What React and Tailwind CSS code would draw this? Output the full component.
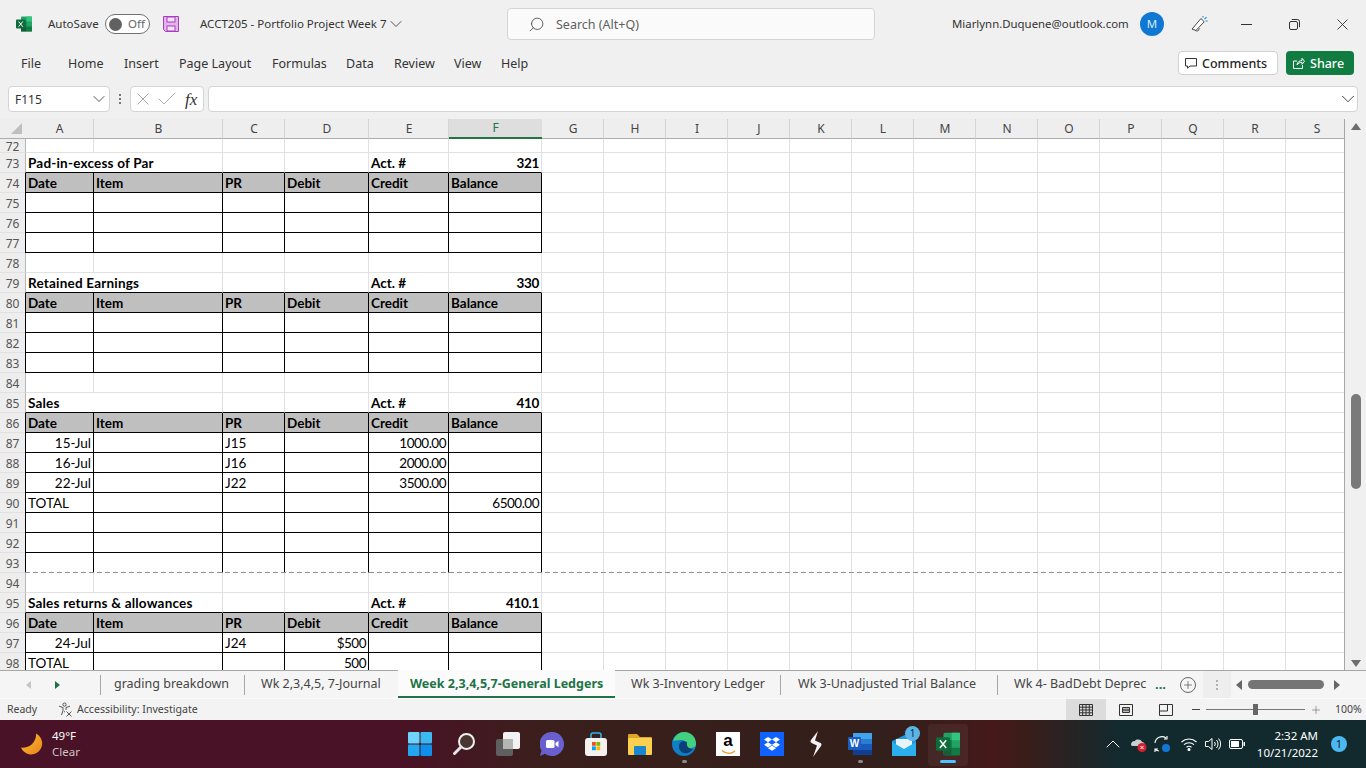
import React from "react";
import { ChevronDown, Search, Check, Plus, ChevronUp } from "lucide-react";

const UI = "font-['Noto_Sans','Open_Sans',sans-serif]";
const COLS = "grid grid-cols-[69px_129px_62px_84px_80px_93px_repeat(13,62px)]";
const LETTERS = "ABCDEFGHIJKLMNOPQRS".split("");
const EMPTY_G = Array(13).fill(0); // G..S columns, always empty

// ledger rows from the sheet
const LEDGER = [
    { n: 72, kind: "plain", h: "h-[14px]" },
    { n: 73, kind: "title", title: "Pad-in-excess of Par", acct: "321" },
    { n: 74, kind: "head" },
    { n: 75, kind: "box" },
    { n: 76, kind: "box" },
    { n: 77, kind: "box" },
    { n: 78, kind: "plain" },
    { n: 79, kind: "title", title: "Retained Earnings", acct: "330" },
    { n: 80, kind: "head" },
    { n: 81, kind: "box" },
    { n: 82, kind: "box" },
    { n: 83, kind: "box" },
    { n: 84, kind: "plain" },
    { n: 85, kind: "title", title: "Sales", acct: "410" },
    { n: 86, kind: "head" },
    { n: 87, kind: "box", cells: ["15-Jul", "", "J15", "", "1000.00", ""] },
    { n: 88, kind: "box", cells: ["16-Jul", "", "J16", "", "2000.00", ""] },
    { n: 89, kind: "box", cells: ["22-Jul", "", "J22", "", "3500.00", ""] },
    { n: 90, kind: "box", cells: ["TOTAL", "", "", "", "", "6500.00"] },
    { n: 91, kind: "box" },
    { n: 92, kind: "box" },
    { n: 93, kind: "box", dashed: true },
    { n: 94, kind: "plain" },
    { n: 95, kind: "title", title: "Sales returns & allowances", acct: "410.1" },
    { n: 96, kind: "head" },
    { n: 97, kind: "box", cells: ["24-Jul", "", "J24", "$500", "", ""] },
    { n: 98, kind: "box", cells: ["TOTAL", "", "", "500", "", ""] }, // clipped by the sheet's bottom edge
];
const HEAD = ["Date", "Item", "PR", "Debit", "Credit", "Balance"];

function ExcelLogo({ size = 16 }) {
    return (
        <svg width={size} height={size} viewBox="0 0 16 16" className="shrink-0">
            <rect x="5" y="0.5" width="11" height="15" rx="1" fill="#21a366" />
            <rect x="10.5" y="0.5" width="5.5" height="5" fill="#33c481" />
            <rect x="5" y="5.5" width="5.5" height="5" fill="#107c41" />
            <rect x="10.5" y="10.5" width="5.5" height="5" fill="#107c41" />
            <rect x="5" y="10.5" width="5.5" height="5" fill="#185c37" />
            <rect x="0" y="3.5" width="9.5" height="9" rx="1" fill="#0e6b3a" />
            <path d="M2.6 5.5l4.200 5.200M6.800 5.500L2.600 10.700" stroke="#fff" strokeWidth="1" fill="none" />
        </svg>
    );
}

function SaveIcon() {
    return (
        <svg width="16" height="16" viewBox="0 0 16 16" className="shrink-0">
            <path d="M.5.5h15v15H2.5l-2-2z" fill="#e3b4ea" stroke="#a93cc0" />
            <rect x="4" y="1" width="8" height="5" fill="#f3e2f6" stroke="#a93cc0" strokeWidth="1" />
            <rect x="4" y="10" width="8" height="5" fill="#f3e2f6" stroke="#a93cc0" strokeWidth="1" />
        </svg>
    );
}

function FeedbackIcon() {
    return (
        <svg width="18" height="18" viewBox="0 0 18 18" fill="none" className="shrink-0">
            <path d="M10 3.5l3.2 3.4-8.4 8.6-3.8-1.4z" stroke="#4a4a4a" strokeWidth="1" fill="#fff" />
            <path d="M4 14.8a2.2 2.2 0 0 0 3.6.5l.7-2" stroke="#4a4a4a" strokeWidth="1" />
            <path d="M13.5 4.2l2-2M14.6 6h2M12 2.6V1" stroke="#1b86d6" strokeWidth="1.1" />
        </svg>
    );
}

function RestoreIcon() {
    return (
        <svg width="11" height="11" viewBox="0 0 11 11" fill="none" stroke="#333" strokeWidth="1" className="shrink-0">
            <rect x="0.5" y="2.5" width="8" height="8" rx="1.5" />
            <path d="M2.8.5h5.7a2 2 0 0 1 2 2v5.7" />
        </svg>
    );
}

function CrossIcon({ size = 11, stroke = "#333" }) {
    return (
        <svg width={size} height={size} viewBox="0 0 11 11" fill="none" stroke={stroke} strokeWidth="0.9" className="shrink-0">
            <path d="M.5.5l10 10M10.500.5l-10 10" />
        </svg>
    );
}

function Toggle() {
    return (
        <div className="ml-[7px] flex h-5 w-[45px] shrink-0 items-center rounded-full border border-[#707070] bg-white pl-[3px]">
            <div className="h-[13px] w-[13px] rounded-full bg-[#616161]" />
            <span className="ml-[6px] text-[11.5px] text-[#666]">Off</span>
        </div>
    );
}

function TitleBar() {
    return (
        <div className="flex h-[48px] items-center pl-4 text-[#333]">
            <ExcelLogo />
            <span className="ml-4 w-[50px] shrink-0 text-[11.5px]">AutoSave</span>
            <Toggle />
            <div className="ml-[13px]"><SaveIcon /></div>
            <span className="ml-[21px] w-[186px] shrink-0 whitespace-nowrap text-[11.5px]">ACCT205 - Portfolio Project Week 7</span>
            <ChevronDown size={20} strokeWidth={1} className="shrink-0" />
            <div className="ml-[101px] flex h-8 w-[368px] shrink-0 items-center rounded border border-[#d4d4d4] bg-[#fafafa] pl-[20px] text-[#666]">
                <Search size={17} strokeWidth={1.2} className="-scale-x-100 text-[#444]" />
                <span className="ml-[11px] pt-[2px] text-[12.5px] text-[#5f5f5f]">Search (Alt+Q)</span>
            </div>
            <span className="ml-[77px] w-[177px] shrink-0 whitespace-nowrap text-[11.4px]">Miarlynn.Duquene@outlook.com</span>
            <div className="ml-[11px] flex h-6 w-6 shrink-0 items-center justify-center rounded-full bg-[#0f78d4] text-[11.5px] text-[#d8e9f8]">M</div>
            <div className="ml-[27px]"><FeedbackIcon /></div>
            <div className="ml-[32px] h-px w-[11px] shrink-0 bg-[#333]" />
            <div className="ml-[37px]"><RestoreIcon /></div>
            <div className="ml-[37px]"><CrossIcon /></div>
        </div>
    );
}

function MenuBar() {
    const tabs = [
        ["File", "ml-[21px] w-[19px]"],
        ["Home", "ml-[28px] w-[35px]"],
        ["Insert", "ml-[21px] w-[32px]"],
        ["Page Layout", "ml-[23px] w-[71px]"],
        ["Formulas", "ml-[22px] w-[53px]"],
        ["Data", "ml-[21px] w-[27px]"],
        ["Review", "ml-[21px] w-[40px]"],
        ["View", "ml-[20px] w-[27px]"],
        ["Help", "ml-[20px] w-[27px]"],
    ];
    return (
        <div className="flex h-[30px] items-center pr-3 text-[12.5px] text-[#333]">
            {tabs.map(([label, cls]) => (
                <span key={label} className={`${cls} shrink-0 whitespace-nowrap pt-[2px]`}>{label}</span>
            ))}
            <div className="ml-auto flex h-6 w-[100px] items-center gap-[5px] rounded border border-[#d0d0d0] bg-white pl-[6px] text-[12.5px] font-medium text-[#262626]">
                <svg width="12" height="12" viewBox="0 0 12 12" fill="none" stroke="#333"><path d="M.5 1.500h11v7.500H5L2.500 11.200V9H.5z" /></svg>
                <span className="pt-[2px]">Comments</span>
            </div>
            <div className="ml-2 flex h-6 w-[68px] items-center gap-[5px] rounded bg-[#107c41] pl-[7px] text-[12.5px] font-medium text-white">
                <svg width="12" height="12" viewBox="0 0 12 12" fill="none" stroke="#fff"><path d="M4 4H.5v7.500h9V8M4 8c.3-3 2.500-4.500 5-4.500V1.300l2.500 3-2.500 3V5.300C7 5.300 5.300 6 4 8z" /></svg>
                <span className="pt-[2px]">Share</span>
            </div>
        </div>
    );
}

function FormulaBar() {
    return (
        <div className="mt-2 flex h-[26px] pl-2 pr-2 text-[#333]">
            <div className="flex w-[102px] items-center justify-between rounded border border-[#d4d4d4] bg-white pl-[6px] text-[12px]">
                <span className="pt-[2px]">F115</span>
                <ChevronDown size={20} strokeWidth={1} />
            </div>
            <div className="flex w-5 flex-col items-center justify-center gap-[2px]">
                <span className="h-[2px] w-[2px] bg-[#777]" />
                <span className="h-[2px] w-[2px] bg-[#777]" />
                <span className="h-[2px] w-[2px] bg-[#777]" />
            </div>
            <div className="flex w-[74px] items-center rounded border border-[#d4d4d4] bg-white pl-[6px]">
                <CrossIcon size={12} stroke="#a6a6a6" />
                <Check size={24} strokeWidth={0.9} className="ml-[6px] shrink-0 text-[#a6a6a6]" />
                <span className="ml-[6px] font-['Liberation_Serif',serif] text-[17px] italic leading-none text-[#333]">fx</span>
            </div>
            <div className="ml-[4px] flex flex-1 items-center justify-end rounded border border-[#d4d4d4] bg-white">
                <ChevronDown size={22} strokeWidth={1} className="-mr-[2px]" />
            </div>
        </div>
    );
}

function ColumnHeader() {
    return (
        <div className={`flex h-5 bg-[#eeeeee] ${UI}`}>
            <div className="flex w-[25px] shrink-0 items-end justify-end border-b border-[#adadad] pb-[4px] pr-[3px]">
                <div className="h-0 w-0 border-b-[11px] border-l-[11px] border-b-[#bfbfbf] border-l-transparent" />
            </div>
            <div className={COLS}>
                {LETTERS.map((c) =>
                    c === "F" ? (
                        <div key={c} className="flex items-center justify-center border-b-2 border-[#217346] bg-[#dedede] text-[12px] text-[#217346]">{c}</div>
                    ) : (
                        <div key={c} className="flex items-center justify-center border-b border-r border-b-[#adadad] border-r-[#d4d4d4] pl-px text-[12px] text-[#444]">{c}</div>
                    )
                )}
            </div>
        </div>
    );
}

function Cell({ children, black, dashed, first, right, tight }) {
    const edge = black ? "border-r-black" : "border-r-[#e1e1e1]";
    const bottom = dashed ? "border-b-transparent" : black ? "border-b-black" : "border-b-[#e1e1e1]";
    const left = first ? (black ? "border-l border-l-black" : "border-l border-l-[#b5b5b5]") : "";
    return (
        <div
            className={`flex items-center whitespace-nowrap border-b border-r px-[2px] pt-[2px] ${edge} ${bottom} ${left} ${right ? "justify-end" : ""} ${tight ? "tracking-[-0.5px]" : ""}`}
        >
            {children}
        </div>
    );
}

function SheetRow({ row }) {
    const { n, kind, h = "h-5" } = row;
    const tail = EMPTY_G.map((_, i) => (
        <div key={i} className={`border-b border-r border-r-[#e1e1e1] ${row.dashed ? "border-b-transparent" : "border-b-[#e1e1e1]"}`} />
    ));
    let cells;
    if (kind === "plain") {
        cells = [0, 1, 2, 3, 4, 5].map((i) => <Cell key={i} first={i === 0} />);
    } else if (kind === "title") {
        cells = (
            <>
                <div className="col-span-2 flex items-center whitespace-nowrap border-b border-l border-r border-b-black border-l-[#b5b5b5] border-r-[#e1e1e1] px-[2px] pt-[2px] font-bold tracking-[0.2px]">{row.title}</div>
                <div className="border-b border-r border-b-black border-r-[#e1e1e1]" />
                <div className="border-b border-r border-b-black border-r-[#e1e1e1]" />
                <div className="flex items-center border-b border-r border-b-black border-r-[#e1e1e1] px-[2px] pt-[2px] font-bold">Act. #</div>
                <div className="flex items-center justify-end border-b border-r border-b-black border-r-[#e1e1e1] px-[2px] pt-[2px] font-bold tracking-[-0.3px]">{row.acct}</div>
            </>
        );
    } else if (kind === "head") {
        cells = HEAD.map((t, i) => (
            <div key={t} className={`flex items-center border-b border-r border-black bg-[#bfbfbf] px-[2px] pt-[2px] font-bold ${i === 0 ? "border-l" : ""}`}>{t}</div>
        ));
    } else {
        const vals = row.cells || ["", "", "", "", "", ""];
        cells = vals.map((v, i) => {
            const numeric = v && !/^(TOTAL|J\d+)$/.test(v);
            return (
                <Cell key={i} black first={i === 0} dashed={row.dashed} right={numeric} tight={/^\$?[\d.]+$/.test(v)}>{v}</Cell>
            );
        });
    }
    return (
        <div className={`relative flex ${h}`}>
            <div className={`flex w-[25px] shrink-0 items-center justify-center border-b border-b-[#e1e1e1] bg-[#eeeeee] pt-[2px] text-[12px] text-[#555] ${UI}`}>{n}</div>
            <div className={`${COLS} font-['Lato','Carlito',sans-serif] text-[13.5px] leading-none text-black`}>
                {cells}
                {tail}
            </div>
            {/* page break line */}
            {row.dashed && (
                <div className="absolute bottom-0 left-[25px] right-0 h-px bg-[repeating-linear-gradient(90deg,#919191_0_5px,transparent_5px_8px)]" />
            )}
        </div>
    );
}

function VScroll() {
    return (
        <div className="flex w-[21px] shrink-0 flex-col items-center bg-[#f0f0f0]">
            <div className="mt-[4px] h-0 w-0 border-b-[7px] border-l-[5px] border-r-[5px] border-b-[#6d6d6d] border-l-transparent border-r-transparent" />
            <div className="mt-[264px] h-[95px] w-[10px] rounded-full bg-[#7a7a7a]" />
            <div className="mt-auto mb-[3px] h-0 w-0 border-l-[5px] border-r-[5px] border-t-[7px] border-l-transparent border-r-transparent border-t-[#6d6d6d]" />
        </div>
    );
}

function TabBar() {
    const inactive = "shrink-0 whitespace-nowrap text-[12.5px] text-[#444]";
    return (
        <div className={`flex h-[28px] items-stretch bg-[#f5f5f5] ${UI}`}>
            <div className="flex w-[398px] shrink-0 items-center border-t border-[#a6a6a6] pl-[26px]">
                <div className="h-0 w-0 border-b-[4px] border-r-[5px] border-t-[4px] border-b-transparent border-r-[#c4c4c4] border-t-transparent" />
                <div className="ml-[24px] h-0 w-0 border-b-[4px] border-l-[5px] border-t-[4px] border-b-transparent border-l-[#217346] border-t-transparent" />
                <div className="ml-[40px] h-[20px] w-px bg-[#a6a6a6]" />
                <span className={`ml-[13px] w-[116px] ${inactive}`}>grading breakdown</span>
                <div className="ml-[14px] h-[20px] w-px bg-[#a6a6a6]" />
                <span className={`ml-[16px] w-[120px] ${inactive}`}>Wk 2,3,4,5, 7-Journal</span>
            </div>
            <div className="flex w-[217px] shrink-0 items-center border-b-2 border-[#217346] bg-[#fbfbfb] pl-3 pt-[2px] text-[12.5px] font-bold text-[#217346]">
                <span className="whitespace-nowrap">Week 2,3,4,5,7-General Ledgers</span>
            </div>
            <div className="flex flex-1 items-center border-t border-[#a6a6a6]">
                <span className={`ml-[16px] w-[132px] ${inactive}`}>Wk 3-Inventory Ledger</span>
                <div className="ml-[17px] h-[20px] w-px bg-[#a6a6a6]" />
                <span className={`ml-[17px] w-[177px] ${inactive}`}>Wk 3-Unadjusted Trial Balance</span>
                <div className="ml-[22px] h-[20px] w-px bg-[#a6a6a6]" />
                <span className={`ml-[16px] w-[134px] ${inactive}`}>Wk 4- BadDebt Deprec</span>
                <span className="ml-[7px] w-[11px] text-[13px] font-bold leading-none text-[#217346]">...</span>
                <div className="ml-[14px] flex h-4 w-4 shrink-0 items-center justify-center rounded-full border border-[#666]">
                    <Plus size={12} strokeWidth={1.5} className="text-[#555]" />
                </div>
                <div className="ml-[7px] flex h-full w-[28px] shrink-0 flex-col items-center justify-center gap-[2px] bg-[#eeeeee]">
                    <span className="h-[2px] w-[2px] bg-[#b0b0b0]" />
                    <span className="h-[2px] w-[2px] bg-[#b0b0b0]" />
                    <span className="h-[2px] w-[2px] bg-[#b0b0b0]" />
                </div>
                <div className="ml-[5px] h-0 w-0 border-b-[5px] border-r-[6px] border-t-[5px] border-b-transparent border-r-[#666] border-t-transparent" />
                <div className="ml-[6px] h-[9px] w-[76px] rounded-full bg-[#757575]" />
                <div className="ml-[10px] h-0 w-0 border-b-[5px] border-l-[6px] border-t-[5px] border-b-transparent border-l-[#666] border-t-transparent" />
            </div>
        </div>
    );
}

function StatusBar() {
    return (
        <div className={`flex h-[22px] items-center border-t border-[#fbfbfb] bg-[#f3f3f3] pl-[7px] text-[#444] ${UI}`}>
            <span className="w-[31px] text-[10.5px]">Ready</span>
            <svg width="15" height="15" viewBox="0 0 15 15" fill="none" stroke="#444" strokeWidth="0.9" className="ml-5 shrink-0">
                <circle cx="6.5" cy="2.6" r="1.6" />
                <path d="M1 4.200l4 1.300v3L3.500 13M12 4.200L8 5.500V8M7 9.500l-1 .5" />
                <path d="M8.500 9.500l5 5M13.500 9.500l-5 5" />
            </svg>
            <span className="ml-[4px] w-[124px] whitespace-nowrap text-[10.6px]">Accessibility: Investigate</span>
            <div className="ml-[865px] flex h-full w-10 shrink-0 items-center justify-center bg-[#dcdcdc]">
                <svg width="14" height="12" viewBox="0 0 14 12" fill="none" stroke="#333"><path d="M.5.5h13v11H.5zM.5 3.200h13M.5 6h13M.5 8.800h13M3.700.5v11M7 .5v11M10.300.5v11" /></svg>
            </div>
            <svg width="14" height="12" viewBox="0 0 14 12" fill="none" stroke="#333" className="ml-[13px] shrink-0"><path d="M.5.5h13v11H.5zM3.500 3.500h7v5h-7zM3.500 5.200h7M3.500 6.800h7" /></svg>
            <svg width="14" height="12" viewBox="0 0 14 12" fill="none" stroke="#333" className="ml-[26px] shrink-0"><path d="M.5.5h13v11H.5zM.5 7h8V.5" /></svg>
            <div className="ml-[19px] h-px w-2 shrink-0 bg-[#444]" />
            <div className="ml-[6px] flex h-px w-[99px] shrink-0 items-center justify-center bg-[#777]">
                <div className="h-[11px] w-[5px] bg-[#666]" />
            </div>
            <Plus size={12} strokeWidth={1} className="ml-[5px] shrink-0" />
            <span className="ml-[13px] text-[10.5px]">100%</span>
        </div>
    );
}

function TaskIcon({ children }) {
    return <div className="relative flex h-full w-[44px] shrink-0 items-center justify-center">{children}</div>;
}

function RunDot() {
    return <span className="absolute bottom-[5px] left-[20px] h-[3px] w-[5px] rounded-full bg-[#8a8a8a]" />;
}

function Taskbar() {
    return (
        <div className={`flex h-[48px] items-center bg-[linear-gradient(90deg,#4a1226_0%,#4a1226_29%,#3a1f1c_40%,#331f1b_65%,#45191a_73%,#3a1d1a_75%,#122a2e_82%,#122a2e_100%)] text-white ${UI}`}>
            <div className="flex w-[398px] shrink-0 items-center pl-[20px]">
                <svg width="24" height="24" viewBox="0 0 24 24">
                    <defs>
                        <linearGradient id="moon" x1="0" y1="0" x2="1" y2="1">
                            <stop offset="0" stopColor="#fbc02d" />
                            <stop offset="1" stopColor="#e8821e" />
                        </linearGradient>
                    </defs>
                    <path d="M16 1.500A11 11 0 1 1 1 15.500a13 13 0 0 0 15-14z" fill="url(#moon)" />
                </svg>
                <div className="ml-2 flex flex-col text-[11.5px] leading-4">
                    <span>49°F</span>
                    <span className="text-[#d0c4c6]">Clear</span>
                </div>
            </div>
            <div className="flex h-full shrink-0">
                <TaskIcon>
                    <svg width="24" height="24" viewBox="0 0 24 24">
                        <rect x="0" y="0" width="11.5" height="11.5" rx="1" fill="#6fd3fb" />
                        <rect x="12.5" y="0" width="11.5" height="11.5" rx="1" fill="#3cb8f3" />
                        <rect x="0" y="12.5" width="11.5" height="11.5" rx="1" fill="#23a8ef" />
                        <rect x="12.5" y="12.5" width="11.5" height="11.5" rx="1" fill="#0f8fe8" />
                    </svg>
                </TaskIcon>
                <TaskIcon>
                    <svg width="24" height="24" viewBox="0 0 24 24" fill="none">
                        <circle cx="14.5" cy="9.5" r="7.5" fill="#4a3530" stroke="#f0f0f0" strokeWidth="2" />
                        <path d="M9 15l-6.500 6.500" stroke="#e6e6e6" strokeWidth="3" strokeLinecap="round" />
                    </svg>
                </TaskIcon>
                <TaskIcon>
                    <svg width="24" height="24" viewBox="0 0 24 24">
                        <rect x="0" y="7" width="17" height="17" rx="2" fill="#5f5f5f" />
                        <rect x="7" y="0" width="17" height="17" rx="2" fill="#f2f2f2" />
                        <rect x="7" y="7" width="10" height="10" fill="#b5b5b5" />
                    </svg>
                </TaskIcon>
                <TaskIcon>
                    <svg width="24" height="24" viewBox="0 0 24 24">
                        <path d="M12 0a12 12 0 1 1-7 21.700L0 24l1.500-5.500A12 12 0 0 1 12 0z" fill="#6a5fcf" />
                        <rect x="6" y="8" width="8.5" height="8" rx="1.5" fill="#fff" />
                        <path d="M15.500 11l3-2.200v6.400l-3-2.200z" fill="#fff" />
                    </svg>
                </TaskIcon>
                <TaskIcon>
                    <svg width="24" height="24" viewBox="0 0 24 24" fill="none">
                        <path d="M7 7V3a2 2 0 0 1 2-2h6a2 2 0 0 1 2 2v4" stroke="#29b6e8" strokeWidth="1.6" />
                        <rect x="1" y="6" width="22" height="18" rx="3" fill="#f4f1ee" />
                        <rect x="8" y="10" width="3.8" height="3.8" fill="#f25022" />
                        <rect x="12.4" y="10" width="3.8" height="3.8" fill="#7fba00" />
                        <rect x="8" y="14.4" width="3.8" height="3.8" fill="#00a4ef" />
                        <rect x="12.4" y="14.4" width="3.8" height="3.8" fill="#ffb900" />
                    </svg>
                </TaskIcon>
                <TaskIcon>
                    <svg width="24" height="24" viewBox="0 0 24 24">
                        <path d="M0 3a1 1 0 0 1 1-1h8l3 3h11a1 1 0 0 1 1 1v3H0z" fill="#e0a526" />
                        <rect x="0" y="6" width="24" height="17" rx="1" fill="#fbd04f" />
                        <rect x="6" y="14" width="12" height="9" rx="1" fill="#1a86d0" />
                    </svg>
                </TaskIcon>
                <TaskIcon>
                    <svg width="24" height="24" viewBox="0 0 24 24">
                        <circle cx="12" cy="12" r="12" fill="#0f7fc8" />
                        <path d="M1 9C3 3 8 0 12 0c6 0 12 4 12 12 0 3-3 4-6 4-2 0-3-1-3-3 0-3-3-5-6-5-4 0-7 1-8 1z" fill="#44d17e" />
                        <path d="M7 14c0-4 4-6 8-4-1 5 2 7 6 7-3 5-11 6-13 1-1-1-1-2-1-4z" fill="#0a3f78" />
                    </svg>
                    <RunDot />
                </TaskIcon>
                <TaskIcon>
                    <div className="flex h-6 w-6 flex-col items-center bg-white font-['Liberation_Sans',sans-serif] text-[17px] font-bold leading-[18px] text-black">
                        a
                        <svg width="15" height="5" viewBox="0 0 15 5" fill="none"><path d="M1 .5c4 3.500 9 3.500 13 .5" stroke="#f09a1a" strokeWidth="1.3" /></svg>
                    </div>
                </TaskIcon>
                <TaskIcon>
                    <svg width="24" height="24" viewBox="0 0 24 24">
                        <rect width="24" height="24" fill="#0f62fe" />
                        <path d="M8 5l4 2.600-4 2.600-4-2.600zM16 5l4 2.600-4 2.600-4-2.600zM8 10.200l4 2.600-4 2.600-4-2.600zM16 10.200l4 2.600-4 2.600-4-2.600zM8 16.200l4-2.600 4 2.600-4 2.600z" fill="#fff" />
                    </svg>
                </TaskIcon>
                <TaskIcon>
                    <svg width="12" height="26" viewBox="0 0 12 26">
                        <path d="M8 0L1 9c-1 1.500-.5 2.500 1 3.200l5 2.300L3 26l8-11c1-1.500.5-2.500-1-3.200L5 9.500z" fill="#f2f2f2" />
                    </svg>
                </TaskIcon>
                <TaskIcon>
                    <svg width="24" height="24" viewBox="0 0 24 24">
                        <rect x="5" y="1" width="19" height="22" rx="1" fill="#2b7cd3" />
                        <rect x="5" y="1" width="19" height="6" fill="#41a5ee" />
                        <rect x="5" y="12" width="19" height="6" fill="#185abd" />
                        <rect x="5" y="18" width="19" height="5" fill="#103f91" />
                        <rect x="0" y="5" width="13" height="13" rx="1" fill="#1a5fbf" />
                        <text x="6.500" y="15" textAnchor="middle" fontSize="10" fontWeight="700" fill="#fff" fontFamily="Liberation Sans">W</text>
                    </svg>
                    <RunDot />
                </TaskIcon>
                <TaskIcon>
                    <svg width="24" height="24" viewBox="0 0 24 24">
                        <path d="M0 9l15-7 9 7v14H0z" fill="#1f9ade" />
                        <path d="M4 7h16v8l-8 4-8-4z" fill="#e8f4fb" />
                        <path d="M0 10l12 7 12-7v14H0z" fill="#2ab0ec" />
                    </svg>
                    <span className="absolute right-[6px] top-[6px] flex h-[15px] w-[15px] items-center justify-center rounded-full bg-[#5ab4e8] text-[10px] text-[#10283a]">1</span>
                </TaskIcon>
                <TaskIcon>
                    <div className="absolute inset-x-[2px] bottom-[2px] top-[4px] rounded bg-white/5" />
                    <span className="relative"><ExcelLogo size={24} /></span>
                    <span className="absolute bottom-[5px] left-[14px] h-[3px] w-4 rounded-full bg-[#4cc2ff]" />
                </TaskIcon>
            </div>
            <div className="flex flex-1 items-center pl-[131px]">
                <ChevronUp size={24} strokeWidth={1} className="shrink-0 text-white" />
                <svg width="18" height="16" viewBox="0 0 18 16" className="ml-[4px] shrink-0">
                    <path d="M2 9a4 4 0 0 1 4-4c1-2 6-2 7 1 2 0 3 2 3 4H3z" fill="#c9cfd1" />
                    <circle cx="13" cy="11.500" r="4.500" fill="#d6202f" />
                    <path d="M11.500 10l3 3M14.500 10l-3 3" stroke="#fff" strokeWidth="1" />
                </svg>
                <svg width="18" height="18" viewBox="0 0 18 18" fill="none" stroke="#fff" strokeWidth="1.1" className="ml-[6px] shrink-0">
                    <path d="M2 8a7 7 0 0 1 11-5M14 1v3h-3M2 17l0-3h3M2 14c1 1 2 2 4 2" />
                    <circle cx="13" cy="13" r="4" fill="#0f78d4" stroke="none" />
                </svg>
                <svg width="16" height="14" viewBox="0 0 16 14" fill="none" stroke="#fff" strokeWidth="1.1" className="ml-[10px] shrink-0">
                    <path d="M.5 5a11 11 0 0 1 15 0M3 7.700a7.500 7.500 0 0 1 10 0M5.500 10.200a4 4 0 0 1 5 0" />
                    <circle cx="8" cy="12.500" r="1" fill="#fff" />
                </svg>
                <svg width="16" height="14" viewBox="0 0 16 14" fill="none" stroke="#fff" strokeWidth="1" className="ml-2 shrink-0">
                    <path d="M.5 4.500h3L7 1.500v11l-3.500-3h-3zM9.500 5a3 3 0 0 1 0 4M11.500 3a6 6 0 0 1 0 8M13.500 1.500a8 8 0 0 1 0 11" />
                </svg>
                <svg width="16" height="10" viewBox="0 0 16 10" fill="none" className="ml-2 shrink-0">
                    <rect x="0.500" y="0.500" width="13" height="9" rx="1.500" stroke="#fff" />
                    <rect x="2" y="2" width="8" height="6" fill="#fff" />
                    <rect x="14.500" y="3" width="1.500" height="4" fill="#fff" />
                </svg>
                <div className="ml-[15px] flex w-[58px] flex-col items-end whitespace-nowrap text-[11.5px] leading-[17px]">
                    <span>2:32 AM</span>
                    <span>10/21/2022</span>
                </div>
                <span className="ml-[13px] flex h-4 w-4 items-center justify-center rounded-full bg-[#4cb8f2] text-[11px] text-[#0c2430]">1</span>
            </div>
        </div>
    );
}

export default function App() {
    return (
        <div className="flex h-[768px] w-[1366px] flex-col overflow-hidden bg-[#f0f0f0]">
            <div className={`h-[119px] shrink-0 ${UI}`}>
                <TitleBar />
                <MenuBar />
                <FormulaBar />
            </div>
            <div className="flex h-[551px] shrink-0">
                <div className="min-w-0 flex-1 overflow-hidden border-r border-[#a6a6a6] bg-white">
                    <ColumnHeader />
                    {LEDGER.map((r) => (
                        <SheetRow key={r.n} row={r} />
                    ))}
                </div>
                <VScroll />
            </div>
            <TabBar />
            <StatusBar />
            <Taskbar />
        </div>
    );
}
